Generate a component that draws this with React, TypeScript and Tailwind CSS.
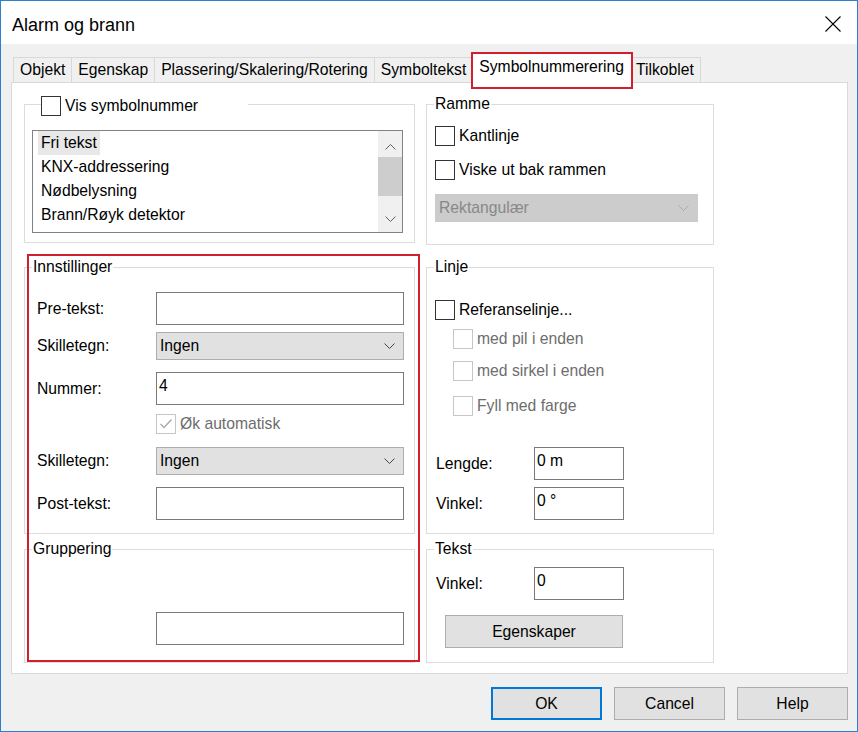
import React from 'react';

function Chevron({ color = '#333333', up = false }: { color?: string; up?: boolean }) {
  return (
    <svg width="11" height="6" viewBox="0 0 11 6" className="shrink-0">
      <path
        d={up ? 'M0.5 5.5 L5.5 0.5 L10.5 5.5' : 'M0.5 0.5 L5.5 5.5 L10.5 0.5'}
        fill="none"
        stroke={color}
        strokeWidth="1"
      />
    </svg>
  );
}

function CheckBox({ checked = false, disabled = false }: { checked?: boolean; disabled?: boolean }) {
  return (
    <span
      className={`flex h-[20px] w-[20px] shrink-0 items-center justify-center border bg-white ${
        disabled ? 'border-[#c6c6c6]' : 'border-[#333333]'
      }`}
    >
      {checked && (
        <svg width="14" height="12" viewBox="0 0 14 12">
          <path d="M1.5 6 L5 9.5 L12.5 1.5" fill="none" stroke={disabled ? '#a8a8a8' : '#000000'} strokeWidth="1.3" />
        </svg>
      )}
    </span>
  );
}

function CheckRow({
  label,
  checked = false,
  disabled = false,
  className = '',
}: {
  label: string;
  checked?: boolean;
  disabled?: boolean;
  className?: string;
}) {
  return (
    <div className={`flex h-[20px] items-center gap-[4px] ${className}`}>
      <CheckBox checked={checked} disabled={disabled} />
      <span className={disabled ? 'text-[#6d6d6d]' : ''}>{label}</span>
    </div>
  );
}

function TextBox({ value = '', className = '' }: { value?: string; className?: string }) {
  return (
    <div className={`h-[33px] shrink-0 border border-[#7a7a7a] bg-white px-[2px] pt-[3px] leading-[20px] ${className}`}>
      {value}
    </div>
  );
}

function DropDown({ value, disabled = false, className = '' }: { value: string; disabled?: boolean; className?: string }) {
  return (
    <div
      className={`flex h-[28px] shrink-0 items-center justify-between border pl-[3px] pr-[8px] ${
        disabled ? 'border-[#cccccc] bg-[#cccccc] text-[#888888]' : 'border-[#adadad] bg-[#e1e1e1]'
      } ${className}`}
    >
      <span>{value}</span>
      <Chevron color={disabled ? '#acacac' : '#444444'} />
    </div>
  );
}

function GroupBox({ title, className = '', children }: { title: string; className?: string; children?: React.ReactNode }) {
  return (
    <div className={`flex flex-col border border-[#dcdcdc] ${className}`}>
      <div className="-mt-[10px] ml-[7px] h-[18px] w-fit bg-white px-[1px] leading-[18px]">{title}</div>
      {children}
    </div>
  );
}

function FieldRow({ label, labelWidth, children, className = '' }: { label: string; labelWidth: string; children: React.ReactNode; className?: string }) {
  return (
    <div className={`flex items-center ${className}`}>
      <span className={`shrink-0 ${labelWidth}`}>{label}</span>
      {children}
    </div>
  );
}

function Button({ label, primary = false, className = '' }: { label: string; primary?: boolean; className?: string }) {
  return (
    <div
      className={`flex h-[33px] items-center justify-center bg-[#e1e1e1] ${
        primary ? 'border-2 border-[#0078d7]' : 'border border-[#adadad]'
      } ${className}`}
    >
      {label}
    </div>
  );
}

const tabs = ['Objekt', 'Egenskap', 'Plassering/Skalering/Rotering', 'Symboltekst', 'Symbolnummerering', 'Tilkoblet'];
const listItems = ['Fri tekst', 'KNX-addressering', 'Nødbelysning', 'Brann/Røyk detektor'];

export default function App() {
  return (
    <div className="flex h-[732px] w-[858px] flex-col border border-[#2b80cf] bg-[#f0f0f0] font-['Liberation_Sans',Arial,sans-serif] text-[15.7px] leading-[18px] text-black">
      {/* title bar */}
      <div className="flex h-[43px] shrink-0 items-center justify-between bg-white pl-[11px] pr-[16px] pt-[2px]">
        <span className="pt-[2px] text-[18px] leading-[22px]">Alarm og brann</span>
        <svg width="16" height="16" viewBox="0 0 16 16">
          <path d="M0.5 0.5 L15.5 15.5 M15.5 0.5 L0.5 15.5" stroke="#000000" strokeWidth="1.1" />
        </svg>
      </div>

      <div className="flex flex-1 flex-col pl-[10px] pr-[9px] pt-[8px]">
        {/* tabs */}
        <div className="flex h-[30px] items-end pl-[2px]">
          {tabs.map((t, i) =>
            t === 'Symbolnummerering' ? (
              <div
                key={t}
                className="relative z-10 -mx-[2px] -mb-[1px] flex h-[31px] items-center border border-b-0 border-[#d9d9d9] bg-white px-[7px] pb-[2px]"
              >
                {t}
                <div className="absolute -bottom-[6px] -left-[1px] -right-[2px] -top-[1px] border-2 border-[#d0202e]" />
              </div>
            ) : (
              <div
                key={t}
                className={`flex h-[25px] items-center border border-b-0 border-[#d9d9d9] bg-[#f0f0f0] px-[6px] ${i > 0 ? '-ml-[1px]' : ''}`}
              >
                {t}
              </div>
            )
          )}
        </div>

        {/* tab page */}
        <div className="flex h-[592px] gap-[11px] border border-[#d9d9d9] bg-white pl-[12px] pt-[21px]">
          {/* left column */}
          <div className="relative flex w-[391px] flex-col">
            <div className="flex h-[139px] flex-col border border-[#dcdcdc]">
              <div className="-mt-[9px] ml-[16px] flex h-[20px] w-[207px] items-center gap-[4px] bg-white">
                <CheckBox />
                <span>Vis symbolnummer</span>
              </div>
              <div className="ml-[7px] mt-[14px] flex h-[103px] w-[371px] border border-[#828282]">
                <div className="flex flex-1 flex-col pl-[5px]">
                  {listItems.map((item, i) => (
                    <div key={item} className="flex h-[24px] items-center">
                      <span className={`flex h-[24px] items-center px-[3px] ${i === 0 ? 'bg-[#e8e8e8]' : ''}`}>{item}</span>
                    </div>
                  ))}
                </div>
                <div className="flex w-[24px] flex-col bg-[#f0f0f0]">
                  <div className="flex h-[26px] items-center justify-center pt-[6px]">
                    <Chevron color="#606060" up />
                  </div>
                  <div className="h-[39px] bg-[#cdcdcd]" />
                  <div className="flex flex-1 items-center justify-center pt-[10px]">
                    <Chevron color="#606060" />
                  </div>
                </div>
              </div>
            </div>

            <GroupBox title="Innstillinger" className="mt-[24px] h-[267px]">
              <div className="flex flex-col pl-[12px]">
                <FieldRow label="Pre-tekst:" labelWidth="w-[119px]" className="mt-[16px]">
                  <TextBox className="w-[248px]" />
                </FieldRow>
                <FieldRow label="Skilletegn:" labelWidth="w-[119px]" className="mt-[7px]">
                  <DropDown value="Ingen" className="w-[248px]" />
                </FieldRow>
                <FieldRow label="Nummer:" labelWidth="w-[119px]" className="mt-[12px]">
                  <TextBox value="4" className="w-[248px]" />
                </FieldRow>
                <CheckRow label="Øk automatisk" checked disabled className="ml-[119px] mt-[9px]" />
                <FieldRow label="Skilletegn:" labelWidth="w-[119px]" className="mt-[13px]">
                  <DropDown value="Ingen" className="w-[248px]" />
                </FieldRow>
                <FieldRow label="Post-tekst:" labelWidth="w-[119px]" className="mt-[12px]">
                  <TextBox className="w-[248px]" />
                </FieldRow>
              </div>
            </GroupBox>

            <GroupBox title="Gruppering" className="mt-[15px] h-[114px]">
              <TextBox className="ml-[131px] mt-[54px] w-[248px]" />
            </GroupBox>

            {/* red highlight */}
            <div className="absolute left-[3px] top-[150px] h-[408px] w-[393px] border-2 border-[#d0202e]" />
          </div>

          {/* right column */}
          <div className="flex w-[288px] flex-col">
            <GroupBox title="Ramme" className="h-[141px]">
              <CheckRow label="Kantlinje" className="ml-[8px] mt-[13px]" />
              <CheckRow label="Viske ut bak rammen" className="ml-[8px] mt-[14px]" />
              <DropDown value="Rektangulær" disabled className="ml-[8px] mt-[14px] w-[263px]" />
            </GroupBox>

            <GroupBox title="Linje" className="mt-[22px] h-[267px]">
              <CheckRow label="Referanselinje..." className="ml-[8px] mt-[24px]" />
              <CheckRow label="med pil i enden" disabled className="ml-[26px] mt-[9px]" />
              <CheckRow label="med sirkel i enden" disabled className="ml-[26px] mt-[12px]" />
              <CheckRow label="Fyll med farge" disabled className="ml-[26px] mt-[15px]" />
              <FieldRow label="Lengde:" labelWidth="w-[98px]" className="ml-[9px] mt-[31px]">
                <TextBox value="0 m" className="w-[90px]" />
              </FieldRow>
              <FieldRow label="Vinkel:" labelWidth="w-[98px]" className="ml-[9px] mt-[7px]">
                <TextBox value="0 °" className="w-[90px]" />
              </FieldRow>
            </GroupBox>

            <GroupBox title="Tekst" className="mt-[15px] h-[114px]">
              <FieldRow label="Vinkel:" labelWidth="w-[98px]" className="ml-[9px] mt-[9px]">
                <TextBox value="0" className="w-[90px]" />
              </FieldRow>
              <Button label="Egenskaper" className="ml-[18px] mt-[15px] w-[178px]" />
            </GroupBox>
          </div>
        </div>

        {/* dialog buttons */}
        <div className="mt-[13px] flex justify-end gap-[12px]">
          <Button label="OK" primary className="w-[111px]" />
          <Button label="Cancel" className="w-[111px]" />
          <Button label="Help" className="w-[111px]" />
        </div>
      </div>
    </div>
  );
}
